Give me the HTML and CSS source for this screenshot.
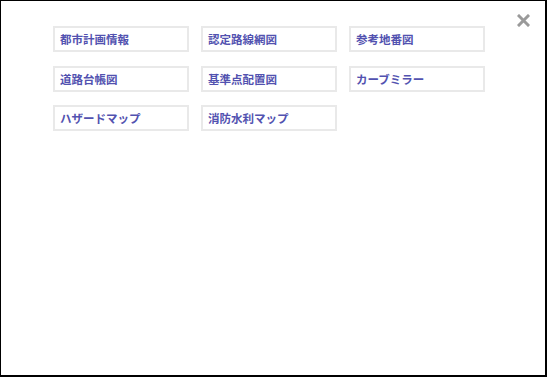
FILE: index.html
```html
<!DOCTYPE html>
<html lang="ja">
<head>
    <meta charset="UTF-8">
    <meta name="viewport" content="width=device-width, initial-scale=1.0">
    <title>レイヤー選択</title>
    <link rel="stylesheet" href="styles.css">
</head>
<body id="page">
    <div id="frame">
        <div id="menu">
            <a class="layer-btn" href="#">都市計画情報</a>
            <a class="layer-btn" href="#">認定路線網図</a>
            <a class="layer-btn" href="#">参考地番図</a>
            <a class="layer-btn" href="#">道路台帳図</a>
            <a class="layer-btn" href="#">基準点配置図</a>
            <a class="layer-btn" href="#">カーブミラー</a>
            <a class="layer-btn" href="#">ハザードマップ</a>
            <a class="layer-btn" href="#">消防水利マップ</a>
        </div>
        <svg class="close-btn" width="13" height="13" viewBox="0 0 13 13">
            <path d="M2 2 L11 11 M11 2 L2 11" stroke="#9a9a9a" stroke-width="3" stroke-linecap="square"/>
        </svg>
    </div>
</body>
</html>
```

FILE: styles.css
```css
#page {
    margin: 0;
    width: 547px;
    height: 377px;
    font-family: "Noto Sans CJK JP", "Liberation Sans", sans-serif;
}

#frame {
    position: relative;
    box-sizing: border-box;
    width: 547px;
    height: 377px;
    border-style: solid;
    border-color: #000;
    border-width: 1px 2px 2px 1px;
    background-color: #fff;
}

#menu {
    display: grid;
    grid-template-columns: repeat(3, 136px);
    column-gap: 12px;
    row-gap: 13.5px;
    padding: 25px 0 0 52px;
}

.layer-btn {
    box-sizing: border-box;
    height: 26px;
    border: 2px solid #e9e9e9;
    padding-left: 5px;
    display: flex;
    align-items: center;
    font-size: 11.5px;
    font-weight: bold;
    color: #5252b0;
    text-decoration: none;
}

.close-btn {
    position: absolute;
    top: 13px;
    left: 516px;
}
```
